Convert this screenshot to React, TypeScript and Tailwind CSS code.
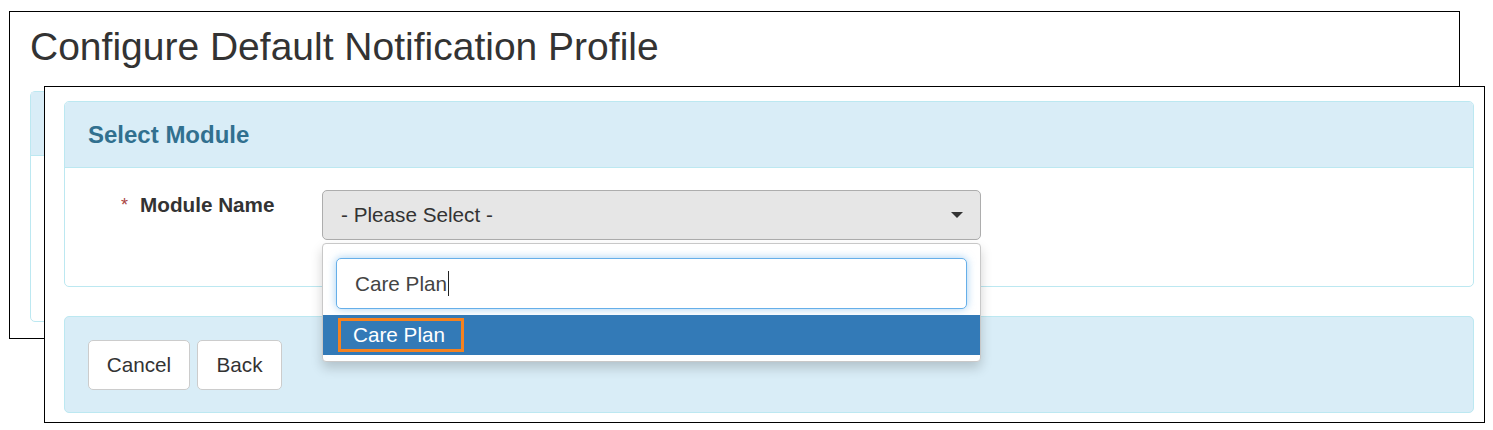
export default function App() {
  return (
    <div className="relative h-[430px] w-[1493px] overflow-hidden bg-white font-['Liberation_Sans',Arial,sans-serif] text-[#333]">
      {/* window behind */}
      <div className="absolute left-[9px] top-[11px] h-[328px] w-[1451px] border border-black bg-white px-[20px] pt-[13px]">
        <h1 className="text-[39px] leading-[44px]">Configure Default Notification Profile</h1>
        <div className="mt-[22px] rounded-[5px] border border-[#bce8f1]">
          <div className="h-[64px] border-b border-[#bce8f1] bg-[#d9edf7]" />
          <div className="h-[165px]" />
        </div>
      </div>

      {/* window in front */}
      <div className="absolute left-[44px] top-[86px] h-[337px] w-[1441px] border border-black bg-white pl-[19px] pr-[10px] pt-[14px]">
        <div className="rounded-[5px] border border-[#bce8f1]">
          <div className="flex h-[66px] items-center rounded-t-[4px] border-b border-[#bce8f1] bg-[#d9edf7] pl-[23px] text-[24px] font-bold text-[#31708f]">
            Select Module
          </div>
          <div className="h-[118px] pt-[22px]">
            <div className="flex items-start">
              <div className="flex w-[257px] items-center pl-[56px] text-[20.7px] leading-[30px] font-bold">
                <span className="mr-[12px] text-[18px] font-normal text-[#a94442]">*</span>
                <span>Module Name</span>
              </div>
              <div className="relative z-10">
                <div className="flex h-[50px] w-[659px] items-center justify-between rounded-[5px] border border-[#adadad] bg-[#e6e6e6] pl-[18px] pr-[17px] text-[20.7px]">
                  <span>- Please Select -</span>
                  <span className="h-0 w-0 border-l-[6px] border-r-[6px] border-t-[6px] border-l-transparent border-r-transparent border-t-[#333]" />
                </div>
                <div className="absolute left-0 top-[53px] w-[659px] rounded-[4px] border border-[#c8c8c8] bg-white pb-[6px] pt-[14px] shadow-[0_6px_12px_rgba(0,0,0,0.18)]">
                  <div className="px-[13px]">
                    <div className="flex h-[51px] items-center rounded-[5px] border border-[#66afe9] bg-white pl-[18px] text-[20.7px] text-[#444] shadow-[0_0_8px_rgba(102,175,233,0.6)]">
                      <span>Care Plan</span>
                      <span className="ml-[1px] h-[25px] w-[1px] bg-[#222]" />
                    </div>
                  </div>
                  <div className="mt-[6px] flex h-[40px] items-center bg-[#337ab7] text-[20.7px] text-white">
                    <span className="ml-[15px] border-[3px] border-[#f58220] pl-[12px] pr-[16px] leading-[28px]">Care Plan</span>
                  </div>
                </div>
              </div>
            </div>
          </div>
        </div>

        <div className="mt-[29px] flex h-[97px] items-start gap-[7px] rounded-[5px] border border-[#bce8f1] bg-[#d9edf7] pl-[23px] pt-[23px] text-[20.7px]">
          <button className="h-[50px] w-[102px] rounded-[5px] border border-[#ccc] bg-white">Cancel</button>
          <button className="h-[50px] w-[85px] rounded-[5px] border border-[#ccc] bg-white">Back</button>
        </div>
      </div>
    </div>
  );
}
